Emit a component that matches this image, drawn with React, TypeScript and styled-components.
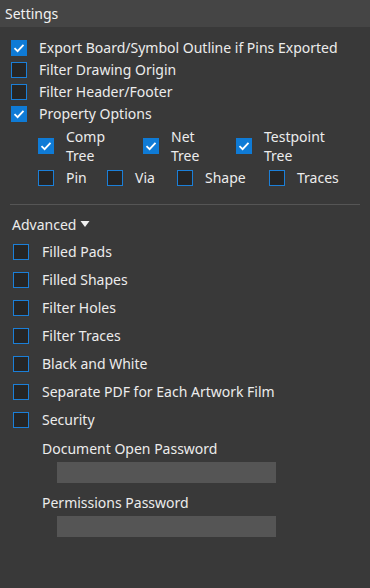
import React from "react";
import styled, { createGlobalStyle } from "styled-components";

const Global = createGlobalStyle`
    body {
        margin: 0;
        background: #393939;
        font-family: "Noto Sans", "Open Sans", sans-serif;
    }
`;

const Panel = styled.div`
    width: 370px;
    height: 588px;
    background: #393939;
    color: #ececec;
    font-size: 14px;
    overflow: hidden;
`;

const Header = styled.div`
    height: 27px;
    background: #454545;
    padding-left: 5px;
    display: flex;
    align-items: center;
    font-size: 14px;
    color: #f2f2f2;
`;

const Section = styled.div<{ $gap: number; $pad: string }>`
    display: flex;
    flex-direction: column;
    gap: ${p => p.$gap}px;
    padding: ${p => p.$pad};
`;

const Row = styled.label<{ $textGap?: number }>`
    display: flex;
    align-items: center;
    gap: ${p => p.$textGap ?? 12}px;
    height: 21px;
    white-space: nowrap;
`;

const Box = styled.span<{ $on?: boolean }>`
    width: 16px;
    height: 16px;
    box-sizing: border-box;
    flex-shrink: 0;
    border: ${p => (p.$on ? "none" : "1.5px solid #1b7fd8")};
    background: ${p => (p.$on ? "#0f7bd6" : "#252525")};
    display: flex;
    align-items: center;
    justify-content: center;
`;

const SubGrid = styled.div<{ $cols: string; $top: number }>`
    display: grid;
    grid-template-columns: ${p => p.$cols};
    padding-left: 38px;
    margin-top: ${p => p.$top}px;
    align-items: center;
`;

const SubItem = styled.div`
    display: flex;
    align-items: center;
    gap: 12px;
`;

const TwoLine = styled.span`
    line-height: 19px;
`;

const Divider = styled.div`
    height: 1px;
    background: #555;
    margin: 16px 10px 0;
`;

const AdvTitle = styled.div`
    display: flex;
    align-items: center;
    gap: 4px;
    padding-left: 12px;
    height: 20px;
    margin-top: 9px;
`;

const Field = styled.div<{ $top: number }>`
    padding-left: 42px;
    margin-top: ${p => p.$top}px;
    display: flex;
    flex-direction: column;
`;

const FieldLabel = styled.div`
    height: 20px;
    display: flex;
    align-items: center;
`;

const Input = styled.div`
    margin: 4px 0 0 15px;
    width: 219px;
    height: 21px;
    background: #555555;
`;

const Check = () => (
    <svg width="12" height="10" viewBox="0 0 12 10">
        <path d="M1.5 5.2 L4.6 8.2 L10.5 1.8" fill="none" stroke="#fff" strokeWidth="1.8" />
    </svg>
);

const CB = ({ on }: { on?: boolean }) => <Box $on={on}>{on && <Check />}</Box>;

const advanced = [
    "Filled Pads",
    "Filled Shapes",
    "Filter Holes",
    "Filter Traces",
    "Black and White",
    "Separate PDF for Each Artwork Film",
    "Security",
];

export default function App() {
    return (
        <Panel>
            <Global />
            <Header>Settings</Header>

            <Section $gap={1} $pad="10px 0 0 11px">
                <Row><CB on />Export Board/Symbol Outline if Pins Exported</Row>
                <Row><CB />Filter Drawing Origin</Row>
                <Row><CB />Filter Header/Footer</Row>
                <Row><CB on />Property Options</Row>
            </Section>

            <SubGrid $cols="105px 93px 1fr" $top={3}>
                <SubItem><CB on /><TwoLine>Comp<br />Tree</TwoLine></SubItem>
                <SubItem><CB on /><TwoLine>Net<br />Tree</TwoLine></SubItem>
                <SubItem><CB on /><TwoLine>Testpoint<br />Tree</TwoLine></SubItem>
            </SubGrid>
            <SubGrid $cols="69px 70px 92px 1fr" $top={2}>
                <Row><CB />Pin</Row>
                <Row><CB />Via</Row>
                <Row><CB />Shape</Row>
                <Row><CB />Traces</Row>
            </SubGrid>

            <Divider />

            <AdvTitle>
                Advanced
                <svg width="10" height="8" viewBox="0 0 10 8">
                    <path d="M0.5 1 L9.5 1 L5 7 Z" fill="#f0f0f0" />
                </svg>
            </AdvTitle>

            <Section $gap={7} $pad="7px 0 0 13px">
                {advanced.map(t => (
                    <Row key={t} $textGap={13}><CB />{t}</Row>
                ))}
            </Section>

            <Field $top={8}>
                <FieldLabel>Document Open Password</FieldLabel>
                <Input />
            </Field>
            <Field $top={9}>
                <FieldLabel>Permissions Password</FieldLabel>
                <Input />
            </Field>
        </Panel>
    );
}
